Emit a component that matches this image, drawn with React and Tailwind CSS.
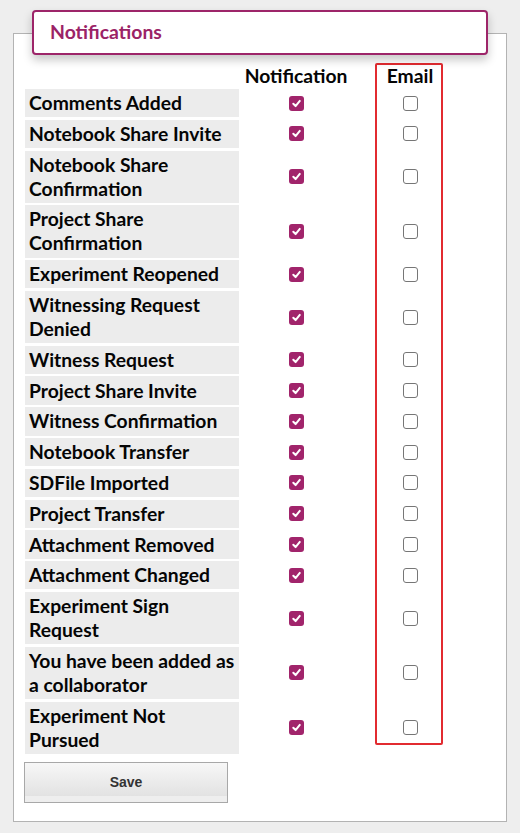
import React from 'react'

const rows = [
  ['Comments Added'],
  ['Notebook Share Invite'],
  ['Notebook Share', 'Confirmation'],
  ['Project Share', 'Confirmation'],
  ['Experiment Reopened'],
  ['Witnessing Request', 'Denied'],
  ['Witness Request'],
  ['Project Share Invite'],
  ['Witness Confirmation'],
  ['Notebook Transfer'],
  ['SDFile Imported'],
  ['Project Transfer'],
  ['Attachment Removed'],
  ['Attachment Changed'],
  ['Experiment Sign', 'Request'],
  ['You have been added as', 'a collaborator'],
  ['Experiment Not', 'Pursued'],
]

const CheckOn = () => (
  <span className="w-[15px] h-[15px] rounded-[3px] bg-[#a1246b] flex items-center justify-center">
    <svg width="11" height="11" viewBox="0 0 12 12" fill="none">
      <path d="M2.5 6.3 L5 8.8 L9.6 3.2" stroke="white" strokeWidth="2.2" strokeLinecap="round" strokeLinejoin="round" />
    </svg>
  </span>
)

const CheckOff = () => (
  <span className="w-[15px] h-[15px] rounded-[3px] bg-white border border-[#767676]" />
)

const App = () => {
  return (
    <div className="w-[520px] h-[833px] bg-[#eeeeee] px-[13px] pt-[10px] font-['Lato',_'Noto_Sans',_sans-serif]">
      <div className="relative z-10 mx-[19px] h-[45px] bg-white border-2 border-[#9d2569] rounded-[4px] shadow-[0_5px_10px_rgba(0,0,0,0.22)] flex items-center pl-[16px]">
        <span className="text-[19.4px] font-bold text-[#9b2366] -mt-[1px]">Notifications</span>
      </div>

      <div className="-mt-[22px] h-[789px] bg-white border border-[#b3b3b3] pt-[30px] pl-[11px]">
        <div className="relative flex flex-col gap-[2.5px] text-[19.3px] font-bold text-[#050505] leading-[24px]">
          <div className="flex gap-[3px] h-[22.5px]">
            <div className="w-[214px]" />
            <div className="w-[108px] text-center">Notification</div>
            <div className="w-[114px] text-center">Email</div>
          </div>

          {rows.map((lines, i) => (
            <div key={i} className="flex gap-[3px]">
              <div className="w-[214px] bg-[#ececec] pl-[4px] py-[2.15px] whitespace-nowrap">
                {lines.map((l, j) => (
                  <div key={j}>{l}</div>
                ))}
              </div>
              <div className="w-[108px] flex items-center justify-center">
                <CheckOn />
              </div>
              <div className="w-[114px] flex items-center justify-center">
                <CheckOff />
              </div>
            </div>
          ))}

          <div className="absolute left-[350px] top-[-1px] w-[68px] h-[682px] border-2 border-[#e22b30] rounded-[2px] pointer-events-none" />
        </div>

        <button
          type="button"
          className="mt-[8px] -ml-[1px] w-[204px] h-[41px] border border-[#a8a8a8] bg-[linear-gradient(#f7f7f7,#e2e2e2_85%,#eeeeee_85%)] text-[14px] font-bold text-[#333333] font-['Liberation_Sans',_sans-serif]"
        >
          Save
        </button>
      </div>
    </div>
  )
}

export default App
